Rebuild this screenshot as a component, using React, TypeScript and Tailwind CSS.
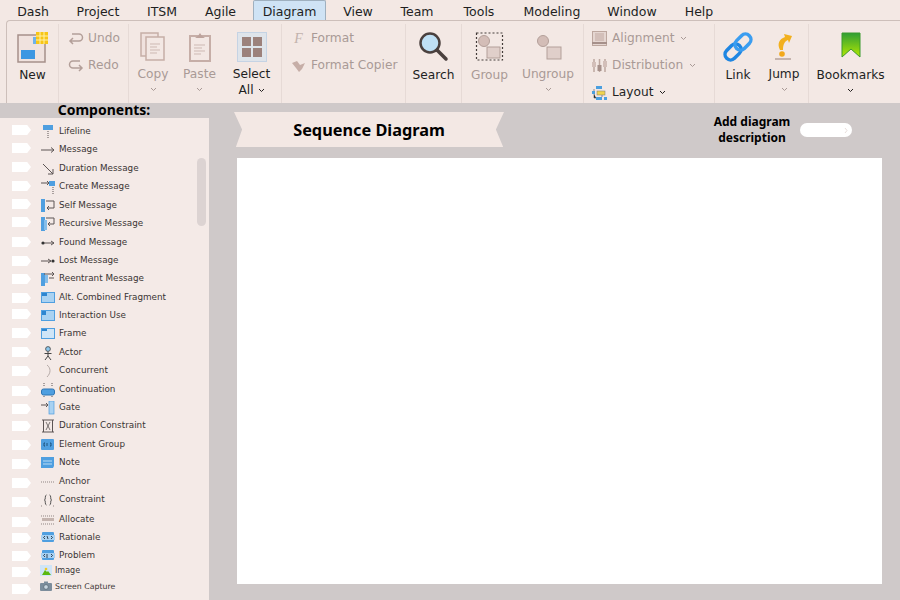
import React from "react";

const UI = "font-['DejaVu_Sans',sans-serif]";
const HEAD = "font-['Noto_Sans',sans-serif]";
const on = "#221f1f";
const off = "#a99a96";

const tabs = [
  ["Dash", "w-[54px]"], ["Project", "w-[76px]"], ["ITSM", "w-[52px]"], ["Agile", "w-[65px]"], ["Diagram", "w-[73px]"],
  ["View", "w-[64px]"], ["Team", "w-[54px]"], ["Tools", "w-[70px]"], ["Modeling", "w-[76px]"], ["Window", "w-[84px]"], ["Help", "w-[50px]"],
];

function Chev({ c = off }: { c?: string }) {
  return (
    <svg width="7" height="5" viewBox="0 0 7 5" className="shrink-0">
      <path d="M1 1l2.500 2.500L6 1" fill="none" stroke={c} strokeWidth="1" />
    </svg>
  );
}

function Big({ w, label, icon, chev, dim, lines, low }: { w: string; label: string; icon: React.ReactNode; chev?: boolean; dim?: boolean; lines?: boolean; low?: boolean }) {
  return (
    <div className={`${w} flex flex-col items-center pt-[7px]`}>
      <div className="h-[32px] flex items-center justify-center">{icon}</div>
      <div className={`${(chev || lines) && !low ? "mt-[3px]" : "mt-[4px]"} text-[12.2px] leading-[16px] whitespace-nowrap ${dim ? "text-[#a99a96]" : "text-[#221f1f]"}`}>{lines ? "Select" : label}</div>
      {lines ? (
        <div className="flex items-center gap-[4px] text-[12.2px] leading-[16px] text-[#221f1f]">All <Chev c={on} /></div>
      ) : chev ? (
        <div className="mt-[5px]"><Chev c={low ? on : off} /></div>
      ) : null}
    </div>
  );
}

function Small({ icon, label, dim, chev }: { icon: React.ReactNode; label: string; dim?: boolean; chev?: boolean }) {
  return (
    <div className={`h-[27px] shrink-0 flex items-center gap-[4px] text-[12.2px] whitespace-nowrap ${dim ? "text-[#a99a96]" : "text-[#221f1f]"}`}>
      <div className="w-[17px] flex justify-center">{icon}</div>
      <span>{label}</span>
      {chev && <span className="ml-[2px] flex"><Chev c={dim ? off : on} /></span>}
    </div>
  );
}

function Divided({ w, children, pl }: { w: string; children: React.ReactNode; pl?: string }) {
  return <div className={`${w} ${pl ?? ""} h-[79px] mt-[3px] border-r border-[#e6dad6] flex shrink-0`}>{children}</div>;
}

const Doc = (
  <svg width="26" height="30" viewBox="0 0 26 30">
    <rect x="1" y="1" width="17" height="23" fill="#f0e2de" stroke="#c6aea7" strokeWidth="1.500" />
    <rect x="6" y="5" width="18" height="23" fill="#f3e8e4" stroke="#c6aea7" strokeWidth="1.500" />
    <path d="M10 12h10M10 15h7M10 18h10M10 21h7" stroke="#cdb9b3" />
  </svg>
);
const Clip = (
  <svg width="24" height="30" viewBox="0 0 24 30">
    <rect x="2" y="4" width="20" height="25" fill="#f3e8e4" stroke="#c6aea7" strokeWidth="2" />
    <path d="M7 6l3-2 2-3 2 3 3 2z" fill="#bda39c" />
    <path d="M6 13h11M6 16h8M6 19h11M6 22h7" stroke="#cdb9b3" />
  </svg>
);

function RowIcon({ n }: { n: string }) {
  const blue = "#4f9fe0";
  const ln = "#5c5554";
  const s: Record<string, React.ReactNode> = {
    Lifeline: <><rect x="2" y="0" width="10" height="5" fill={blue} /><path d="M7 6v8" stroke={ln} strokeDasharray="1 1" /></>,
    Message: <path d="M0 7h13M10 4.500l3 2.500-3 2.500" fill="none" stroke={ln} />,
    Duration: <path d="M2 2l10 10M12 7v5H7" fill="none" stroke={ln} />,
    Create: <><path d="M0 3h8M6 1l2 2-2 2" fill="none" stroke={ln} /><rect x="8" y="1" width="6" height="5" fill={blue} /><path d="M12 7v7" stroke={ln} strokeDasharray="1 1" /></>,
    Self: <><rect x="0" y="0" width="4" height="13" fill={blue} /><path d="M5 2h8v7H6M8 7L6 9l2 2" fill="none" stroke={ln} /></>,
    Recursive: <><rect x="0" y="0" width="4" height="14" fill={blue} /><rect x="3" y="3" width="3" height="10" fill="#84bdea" /><path d="M5 1h8v6H7M9 5L7 7l2 2" fill="none" stroke={ln} /></>,
    Found: <><circle cx="2" cy="7" r="1.600" fill="#333" /><path d="M3 7h10M10 5l3 2-3 2" fill="none" stroke={ln} /></>,
    Lost: <><path d="M0 7h10M7 5l3 2-3 2" fill="none" stroke={ln} /><circle cx="12" cy="7" r="1.600" fill="#333" /></>,
    Reentrant: <><rect x="0" y="1" width="4" height="13" fill={blue} /><rect x="4" y="3" width="3" height="8" fill="#84bdea" /><path d="M3 2h10M11 0l2 2-2 2M13 6H8" fill="none" stroke={ln} /></>,
    Alt: <><rect x="0.500" y="1.500" width="13" height="10" fill="#a9d2f2" stroke={blue} /><rect x="1" y="2" width="5" height="3" fill="#2e86d0" /></>,
    Use: <><rect x="0.500" y="1.500" width="13" height="10" fill="#a9d2f2" stroke={blue} /><rect x="1" y="2" width="4" height="4" fill="#2e86d0" /></>,
    Frame: <><rect x="0.500" y="1.500" width="13" height="10" fill="#cfe5f7" stroke={blue} /><rect x="1" y="2" width="5" height="2" fill="#2e86d0" /></>,
    Actor: <><circle cx="7" cy="3" r="2.400" fill="#8cc8ee" stroke="#444" strokeWidth=".8" /><path d="M7 5.500V10M3.500 7.500h7M7 10l-3 4M7 10l3 4" fill="none" stroke="#444" /></>,
    Concurrent: <path d="M6 1c4 3 4 8 0 12" fill="none" stroke="#b5aaa7" />,
    Continuation: <><rect x="0.500" y="6" width="13" height="6" rx="2" fill={blue} stroke="#2e76b5" /><path d="M3 0v4M11 0v4M3 13v1M11 13v1" stroke={ln} strokeDasharray="1 1" /></>,
    Gate: <><path d="M0 4h7M5 2l2 2-2 2" fill="none" stroke={ln} /><rect x="8" y="0" width="5" height="13" fill="#a9d2f2" stroke={blue} strokeWidth=".7" /></>,
    Constraint2: <><path d="M1 1h12M1 13h12M2.500 1v12M11.500 1v12" fill="none" stroke={ln} /><path d="M5 3l2 4-2 4M9 3L7 7l2 4" fill="none" stroke={ln} strokeWidth=".8" /></>,
    Group: <><rect x="0" y="1" width="13" height="11" rx="1" fill={blue} /><path d="M4 5H3v3h1M9 5h1v3H9M6 5v3" stroke="#123f66" fill="none" strokeWidth=".8" /></>,
    Note: <><path d="M0 1h13v9l-1 2H0z" fill={blue} /><path d="M2 5h9M2 8h9" stroke="#bcdcf4" /></>,
    Anchor: <path d="M0 7h14" stroke="#8f8583" strokeDasharray="1 1" />,
    Brace: <><path d="M5.500 2C3.500 2 5 6.500 3.500 7 5 7.500 3.500 12 5.500 12M8.500 2c2 0 .5 4.500 2 5-1.500.5 0 5-2 5" fill="none" stroke="#444" strokeWidth=".9" /><path d="M0 13h2M12 13h2" stroke="#8f8583" strokeDasharray="1 1" /></>,
    Allocate: <><path d="M0 3h14M0 11h14" stroke="#8f8583" strokeDasharray="1 1" /><rect x="1" y="5" width="12" height="3" fill="#c4b4af" /></>,
    Rationale: <><rect x="1" y="1" width="12" height="10" rx="1" fill={blue} /><rect x="0" y="4" width="14" height="5" fill="#a9d2f2" /><path d="M4 5L2.500 6.500 4 8M10 5l1.500 1.500L10 8M6 5l1 3" fill="none" stroke="#123" strokeWidth=".8" /></>,
    Problem: <><rect x="1" y="1" width="12" height="10" rx="1" fill={blue} /><rect x="0" y="4" width="14" height="5" fill="#a9d2f2" /><path d="M4 5L2.500 6.500 4 8M10 5l1.500 1.500L10 8M6 5v4" fill="none" stroke="#123" strokeWidth=".8" /></>,
    Image: <><rect x="0" y="1" width="12" height="11" fill="#cfe5f7" /><path d="M2 11l3-5 2 2 1-1 3 4z" fill="#5bb811" /><circle cx="6" cy="5" r="1.300" fill="#f3c623" /></>,
    Capture: <><rect x="0" y="3" width="12" height="8" rx="1" fill="#7c8d9c" /><rect x="4" y="1.500" width="4" height="2" fill="#7c8d9c" /><circle cx="6" cy="7" r="2.300" fill="#c8d5df" stroke="#4c5a66" strokeWidth=".6" /></>,
  };
  return <svg width="14" height="14" viewBox="0 0 14 14" className="shrink-0">{s[n]}</svg>;
}

const items: { t: string; i: string; h: string; x?: string; f?: string }[] = [
  { t: "Lifeline", i: "Lifeline", h: "h-[18px]" },
  { t: "Message", i: "Message", h: "h-[19px]" },
  { t: "Duration Message", i: "Duration", h: "h-[18px]" },
  { t: "Create Message", i: "Create", h: "h-[19px]" },
  { t: "Self Message", i: "Self", h: "h-[18px]" },
  { t: "Recursive Message", i: "Recursive", h: "h-[19px]" },
  { t: "Found Message", i: "Found", h: "h-[18px]" },
  { t: "Lost Message", i: "Lost", h: "h-[18px]" },
  { t: "Reentrant Message", i: "Reentrant", h: "h-[19px]" },
  { t: "Alt. Combined Fragment", i: "Alt", h: "h-[18px]" },
  { t: "Interaction Use", i: "Use", h: "h-[18px]" },
  { t: "Frame", i: "Frame", h: "h-[19px]" },
  { t: "Actor", i: "Actor", h: "h-[18px]" },
  { t: "Concurrent", i: "Concurrent", h: "h-[19px]" },
  { t: "Continuation", i: "Continuation", h: "h-[18px]" },
  { t: "Gate", i: "Gate", h: "h-[18px]" },
  { t: "Duration Constraint", i: "Constraint2", h: "h-[19px]" },
  { t: "Element Group", i: "Group", h: "h-[18px]" },
  { t: "Note", i: "Note", h: "h-[19px]" },
  { t: "Anchor", i: "Anchor", h: "h-[18px]" },
  { t: "Constraint", i: "Brace", h: "h-[20px]" },
  { t: "Allocate", i: "Allocate", h: "h-[18px]" },
  { t: "Rationale", i: "Rationale", h: "h-[18px]" },
  { t: "Problem", i: "Problem", h: "h-[15px]" },
  { t: "Image", i: "Image", h: "h-[16px]", x: "-ml-[1px] gap-[1px]", f: "text-[8px]" },
  { t: "Screen Capture", i: "Capture", h: "h-[14px]", x: "-ml-[1px] gap-[1px]", f: "text-[7.8px]" },
];

const pills = ["h-[18px]","h-[19px]","h-[19px]","h-[18px]","h-[18px]","h-[20px]","h-[19px]","h-[18px]","h-[19px]","h-[16px]","h-[19px]","h-[19px]","h-[19px]","h-[20px]","h-[18px]","h-[17px]","h-[19px]","h-[19px]","h-[19px]","h-[19px]","h-[20px]","h-[16px]","h-[18px]","h-[16px]","h-[17px]","h-[10px]"];

export default function App() {
  return (
    <div className={`${UI} w-[900px] h-[600px] overflow-hidden flex flex-col bg-[#cfc9c9]`}>
      <div className="h-[103px] shrink-0 bg-[#f3e8e4] flex flex-col">
        <div className="h-[21px] flex items-end pl-[6px] text-[12.5px] text-[#221f1f]">
          {tabs.map(([t, w]) => (
            <div key={t} className={`${w} h-[20px] pt-[4px] flex items-center justify-center ${t === "Diagram" ? "bg-[#cfe3f5] border border-b-0 border-[#9fb0bf] rounded-t-[2px]" : ""}`}>{t}</div>
          ))}
        </div>
        <div className="ml-[6px] flex-1 flex border-t border-l border-[#cdbfba] rounded-tl-[4px]">
          <Divided w="w-[52px]">
            <Big w="w-[52px]" label="New" icon={
              <svg width="32" height="32" viewBox="0 0 32 32">
                <rect x="1" y="4" width="27" height="27" fill="#f0e2de" stroke="#a6908a" strokeWidth="1.500" />
                <rect x="4" y="19" width="14" height="9" fill="#3d97e2" />
                <rect x="16" y="6" width="10" height="7" fill="#6fb2ea" />
                <path d="M19 1h12v12H19z" fill="#f7c517" />
                <path d="M23 1v12M27 1v12M19 5h12M19 9h12" stroke="#fff1a8" />
              </svg>} />
          </Divided>
          <Divided w="w-[70px]" pl="pl-[8px] pt-[1px] flex-col">
            <Small dim label="Undo" icon={<svg width="16" height="12" viewBox="0 0 16 12"><path d="M4 1h7a3.500 3.500 0 0 1 0 7H2M5 5L2 8l3 3" fill="none" stroke="#b39f99" strokeWidth="1.500" /></svg>} />
            <Small dim label="Redo" icon={<svg width="16" height="12" viewBox="0 0 16 12"><path d="M12 1H5a3.500 3.500 0 0 0 0 7h9M11 5l3 3-3 3" fill="none" stroke="#b39f99" strokeWidth="1.500" /></svg>} />
          </Divided>
          <Divided w="w-[153px]" pl="pl-[1px]">
            <Big w="w-[46px]" dim chev label="Copy" icon={Doc} />
            <Big w="w-[47px]" dim chev label="Paste" icon={Clip} />
            <Big w="w-[57px]" lines label="Select" icon={
              <div className="w-[30px] h-[30px] bg-[#dfe4ea] border border-[#c5d3e4] grid grid-cols-2 gap-[2px] p-[4px]">
                <div className="bg-[#9c817b]" /><div className="bg-[#9c817b]" /><div className="bg-[#9c817b]" /><div className="bg-[#9c817b]" />
              </div>} />
          </Divided>
          <Divided w="w-[124px]" pl="pl-[8px] pt-[1px] flex-col">
            <Small dim label="Format" icon={<span className="font-['Liberation_Serif',serif] italic text-[14px] text-[#c2b2ad]">F</span>} />
            <Small dim label="Format Copier" icon={<svg width="16" height="14" viewBox="0 0 16 14"><path d="M1 4l5-2 3 4 5-2-3 6-3 3-3-4z" fill="#c6aea7" /></svg>} />
          </Divided>
          <Divided w="w-[56px]">
            <Big w="w-[56px]" label="Search" icon={
              <svg width="32" height="32" viewBox="0 0 32 32">
                <circle cx="12" cy="12" r="9.500" fill="#bfe0f5" stroke="#4a403e" strokeWidth="2.500" />
                <path d="M19 19l9 9" stroke="#4a403e" strokeWidth="3.500" strokeLinecap="round" />
              </svg>} />
          </Divided>
          <Divided w="w-[122px]">
            <Big w="w-[55px]" dim label="Group" icon={
              <svg width="30" height="30" viewBox="0 0 30 30">
                <rect x="1.500" y="1" width="26" height="27" fill="none" stroke="#443c3a" strokeWidth="1.200" strokeDasharray="2 2" />
                <circle cx="9" cy="9" r="5.500" fill="#d3bdb7" stroke="#b39f99" />
                <rect x="12" y="15" width="13" height="11" fill="#e0cfca" stroke="#b39f99" />
              </svg>} />
            <Big w="w-[62px]" dim chev label="Ungroup" icon={
              <svg width="30" height="30" viewBox="0 0 30 30">
                <circle cx="10" cy="9" r="5.500" fill="#d3bdb7" stroke="#b39f99" />
                <rect x="14" y="15" width="14" height="12" fill="#e0cfca" stroke="#b39f99" />
              </svg>} />
          </Divided>
          <Divided w="w-[131px]" pl="pl-[7px] pt-[1px] flex-col">
            <Small dim chev label="Alignment" icon={<svg width="15" height="15" viewBox="0 0 15 15"><rect x="0.500" y="0.500" width="14" height="14" fill="#e5d6d1" stroke="#bda79f" /><rect x="3" y="2" width="9" height="8" fill="#d3bfb9" /><path d="M0 12h15" stroke="#a6908a" strokeWidth="2" /></svg>} />
            <Small dim chev label="Distribution" icon={<svg width="15" height="15" viewBox="0 0 15 15"><path d="M2 1v13M7.500 1v13M13 1v13" stroke="#bda79f" strokeWidth="1.500" /><rect x="0" y="4" width="4" height="5" fill="#d3bfb9" /><rect x="5.500" y="7" width="4" height="6" fill="#a6908a" /><rect x="11" y="3" width="4" height="6" fill="#d3bfb9" /></svg>} />
            <Small chev label="Layout" icon={<svg width="16" height="16" viewBox="0 0 16 16"><rect x="4" y="1" width="6" height="3" fill="#4b9fdf" /><rect x="5" y="6" width="8" height="4" fill="#f1d34d" stroke="#777" strokeWidth=".5" /><rect x="0" y="6" width="3" height="3" fill="#4b9fdf" /><rect x="4" y="12" width="6" height="3" fill="#4b9fdf" /><rect x="12" y="12" width="3" height="3" fill="#4b9fdf" /><path d="M2 4v2M2 9v4h2M10 10v2" stroke="#666" strokeWidth=".7" /></svg>} />
          </Divided>
          <Divided w="w-[94px]">
            <Big w="w-[46px]" label="Link" icon={
              <svg width="30" height="30" viewBox="0 0 30 30">
                <g fill="none" strokeLinecap="round" transform="rotate(-45 15 15)">
                  <rect x="-1" y="9.500" width="18" height="11" rx="5.500" stroke="#1f86e2" strokeWidth="3.500" />
                  <rect x="13" y="9.500" width="18" height="11" rx="5.500" stroke="#3a9df0" strokeWidth="3.500" />
                </g>
              </svg>} />
            <Big w="w-[46px]" chev label="Jump" icon={
              <svg width="24" height="30" viewBox="0 0 24 30">
                <path d="M8 18C5 12 7 7 13 5l-1-3 8 2-3 7-1-3c-3 1-5 4-5 10z" fill="#f2b01e" />
                <circle cx="10" cy="22" r="2.800" fill="#f2a81a" />
                <path d="M3 27h16" stroke="#a6908a" strokeWidth="1.200" />
              </svg>} />
          </Divided>
          <div className="mt-[3px]">
            <Big w="w-[83px]" chev low label="Bookmarks" icon={
              <svg width="20" height="26" viewBox="0 0 20 26" className="mb-[5px]">
                <defs><linearGradient id="bm" x1="0" y1="0" x2="0" y2="1"><stop offset="0" stopColor="#2f9e35" /><stop offset="1" stopColor="#b4e800" /></linearGradient></defs>
                <path d="M1 1h18v24l-9-8-9 8z" fill="url(#bm)" stroke="#3b9a2c" />
              </svg>} />
          </div>
        </div>
      </div>

      <div className="flex-1 flex min-h-0">
        <aside className="w-[209px] shrink-0 flex flex-col">
          <div className={`${HEAD} h-[15px] text-[14px] leading-[14px] font-bold text-black text-center pr-[1px]`}>Components:</div>
          <div className="relative flex-1 bg-[#f4eae7] flex overflow-hidden">
            <div className="w-[41px] shrink-0 pl-[12px] pt-[7px] flex flex-col">
              {pills.map((h, i) => (
                <div key={i} className={`${h} shrink-0`}>
                  <div className="w-[19px] h-[10px] bg-white [clip-path:polygon(0_0,80%_0,100%_50%,80%_100%,0_100%)]" />
                </div>
              ))}
            </div>
            <div className="flex-1 pt-[5px] flex flex-col text-[#3a3534]">
              {items.map((it) => (
                <div key={it.t} className={`${it.h} shrink-0`}>
                  <div className={`h-[18px] flex items-center whitespace-nowrap ${it.x ?? "gap-[4px]"} ${it.f ?? "text-[8.8px]"}`}>
                    <RowIcon n={it.i} />
                    <span>{it.t}</span>
                  </div>
                </div>
              ))}
            </div>
            <div className="absolute left-[197px] top-[40px] w-[9px] h-[68px] rounded-full bg-[#dcd3d2]" />
          </div>
        </aside>
        <main className="flex-1 flex flex-col pl-[25px] pr-[18px] pt-[9px] min-w-0">
          <div className="h-[46px] shrink-0 flex items-start">
            <div className={`${HEAD} w-[270px] h-[35px] pt-[1px] bg-[#f3e8e4] [clip-path:polygon(0_0,100%_0,97%_50%,99.700%_100%,0.700%_100%,3%_50%)] flex items-center justify-center text-[16.3px] font-bold text-black`}>Sequence Diagram</div>
            <div className={`${HEAD} ml-[203px] mt-[2px] w-[90px] shrink-0 text-center text-[12px] leading-[16px] font-bold text-black`}>Add diagram description</div>
            <div className="ml-[3px] mt-[11px] w-[52px] h-[14px] rounded-full bg-white shrink-0 flex items-center justify-end pr-[4px]">
              <svg width="4" height="7" viewBox="0 0 4 7"><path d="M1 1l2 2.500L1 6" fill="none" stroke="#e8dedb" /></svg>
            </div>
          </div>
          <div className="ml-[3px] w-[645px] h-[426px] bg-white" />
        </main>
      </div>
    </div>
  );
}
